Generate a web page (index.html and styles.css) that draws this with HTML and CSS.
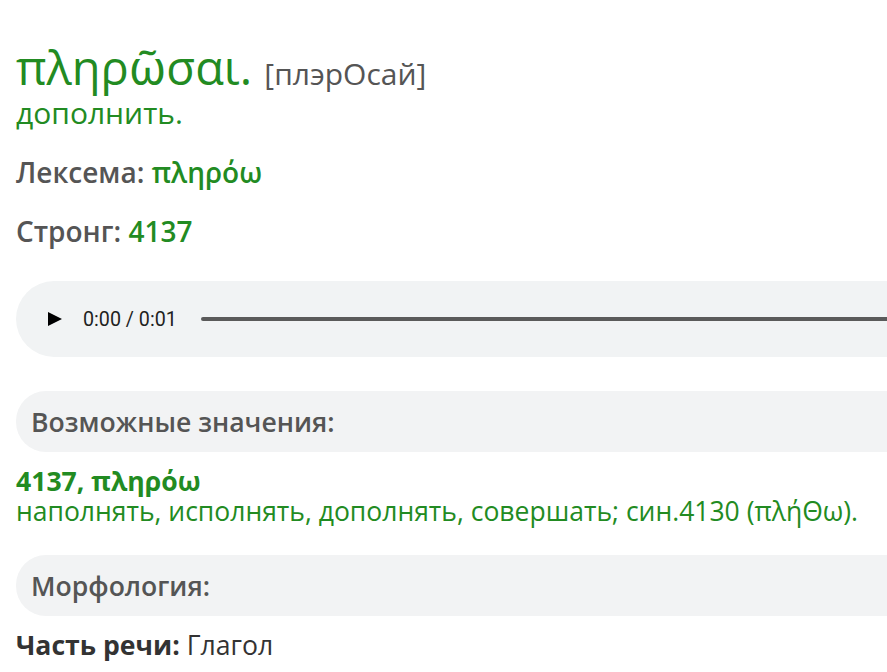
FILE: index.html
```html
<!DOCTYPE html>
<html lang="ru">
<head>
<meta charset="utf-8">
<link rel="stylesheet" href="styles.css">
</head>
<body>
<main class="page">
  <h1 class="title"><span class="word">πληρῶσαι.</span> <span class="translit">[плэрОсай]</span></h1>
  <p class="gloss">дополнить.</p>
  <p class="field field-lex"><span class="label">Лексема:</span> <span class="value">πληρόω</span></p>
  <p class="field field-strong"><span class="label">Стронг:</span> <span class="value">4137</span></p>
  <div class="player">
    <svg class="play" width="14" height="14" viewBox="0 0 14 14"><path d="M0 0 L14 7 L0 14 Z" fill="#000"/></svg>
    <span class="time">0:00 / 0:01</span>
    <div class="track"></div>
  </div>
  <div class="section section-first">Возможные значения:</div>
  <div class="meaning">
    <div class="m-head">4137, πληρόω</div>
    <div class="m-text">наполнять, исполнять, дополнять, совершать; син.4130 (πλήΘω).</div>
  </div>
  <div class="section section-morph">Морфология:</div>
  <p class="morph"><b>Часть речи:</b> Глагол</p>
</main>
</body>
</html>
```

FILE: styles.css
```css
html, body {
  margin: 0;
  padding: 0;
  overflow: hidden;
  background: #fff;
}
body {
  font-family: "Open Sans", "Noto Sans", sans-serif;
  color: #555;
}
.page {
  width: 1000px;
  padding: 0 0 0 16px;
}
.title {
  margin: 44px 0 0;
  font-weight: 400;
  line-height: 46px;
  font-size: 47px;
  color: #228b22;
}
.translit {
  font-size: 30px;
  color: #555;
}
.gloss {
  margin: 0;
  font-size: 30px;
  line-height: 32px;
  color: #228b22;
}
.field {
  margin: 0;
  font-size: 28px;
  line-height: 38px;
  font-weight: 600;
}
.field-lex {
  margin-top: 24px;
}
.field-strong {
  margin-top: 21px;
}
.value {
  color: #228b22;
}
.player {
  margin-top: 31px;
  height: 76px;
  border-radius: 38px 0 0 38px;
  background: #f1f3f4;
  display: flex;
  align-items: center;
  padding-left: 32px;
}
.play {
  flex: none;
}
.time {
  font-family: Roboto, "Liberation Sans", sans-serif;
  font-size: 19.7px;
  color: #1f1f1f;
  margin-left: 21px;
}
.track {
  flex: 1;
  height: 4px;
  border-radius: 2px;
  background: #5a5a5a;
  margin-left: 24px;
}
.section {
  height: 61px;
  border-radius: 30px 0 0 30px;
  background: #f2f3f4;
  padding-left: 15px;
  display: flex;
  align-items: center;
  font-size: 26.6px;
  font-weight: 600;
  color: #555;
}
.section-first {
  margin-top: 34px;
}
.section-morph {
  margin-top: 30px;
}
.meaning {
  margin-top: 13px;
  color: #228b22;
}
.m-head {
  font-size: 26.6px;
  font-weight: 700;
  line-height: 32px;
}
.m-text {
  font-size: 26.5px;
  line-height: 28px;
}
.morph {
  margin: 11px 0 0;
  font-size: 26.6px;
  line-height: 36px;
  color: #333;
}
.morph b {
  font-weight: 700;
}
```
